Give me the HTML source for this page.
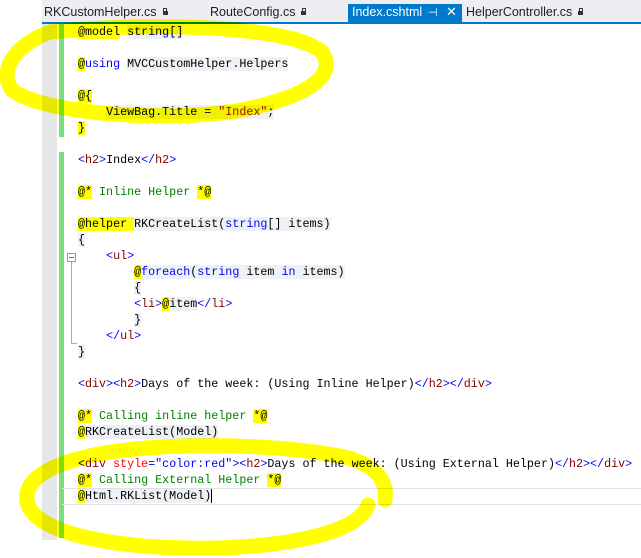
<!DOCTYPE html>
<html><head><meta charset="utf-8"><style>
*{margin:0;padding:0;box-sizing:border-box}
body{width:641px;height:558px;background:#fff;position:relative;overflow:hidden;font-family:"Liberation Mono",monospace}
.tabbar{position:absolute;left:42px;top:0;width:599px;height:22px;background:#eeeef2}
.tab{position:absolute;top:5px;font-family:"Liberation Sans",sans-serif;font-size:12.5px;color:#1e1e1e;white-space:nowrap}
.blue{position:absolute;left:42px;top:22px;width:599px;height:2px;background:#007acc}
.act{position:absolute;left:348px;top:4px;width:114px;height:19px;background:#007acc}
.gut{position:absolute;left:42px;top:24px;width:15px;height:516px;background:#e6e7e8}
.gr{position:absolute;left:59px;width:5px;background:#7ddc7d}
.l{position:absolute;left:78px;height:16px;line-height:16px;font-size:11.7px;color:#000;white-space:pre}
.y{background:#ffff00}
.c{background:#eef1f5}
.k{color:#0000ff}
.t{color:#800000}
.s{color:#a31515}
.m{color:#008000}
.r{color:#ff0000}
.lock{display:inline-block;width:5px;height:4px;background:#333;position:relative;margin-left:6px;top:-1px}
.lock:before{content:"";position:absolute;left:0.5px;top:-3px;width:2px;height:2px;border:1px solid #333;border-bottom:none}
</style></head><body>
<div class="tabbar"></div>
<div class="act"></div>
<div class="tab" style="left:44px">RKCustomHelper.cs<span class="lock"></span></div>
<div class="tab" style="left:210px">RouteConfig.cs<span class="lock"></span></div>
<div class="tab" style="left:352px;color:#fff">Index.cshtml</div>
<div class="tab" style="left:428px;color:#fff;font-size:11px;top:6px">⊣</div>
<div class="tab" style="left:446px;color:#fff;top:4px;font-size:13px">✕</div>
<div class="tab" style="left:466px">HelperController.cs<span class="lock"></span></div>
<div class="blue"></div>
<div class="gut"></div>
<div class="gr" style="top:24px;height:113px"></div>
<div class="gr" style="top:152px;height:386px"></div>
<div style="position:absolute;left:67px;top:253px;width:9px;height:9px;border:1px solid #999;background:#fff"></div>
<div style="position:absolute;left:69px;top:257px;width:5px;height:1px;background:#666"></div>
<div style="position:absolute;left:71px;top:262px;width:1px;height:82px;background:#aaa"></div>
<div style="position:absolute;left:71px;top:343px;width:6px;height:1px;background:#aaa"></div>
<div style="position:absolute;left:62px;top:488px;width:579px;height:17px;border-top:1px solid #e0e0e0;border-bottom:1px solid #e0e0e0"></div>

<div class="l" style="top:24px"><span class="y">@model</span> <span class="c"><span class="k">string</span>[]</span></div>
<div class="l" style="top:56px"><span class="y">@</span><span class="k">using</span> <span class="c">MVCCustomHelper.Helpers</span></div>
<div class="l" style="top:88px"><span class="y">@{</span></div>
<div class="l" style="top:104px">    <span class="c">ViewBag.Title = <span class="s">"Index"</span>;</span></div>
<div class="l" style="top:120px"><span class="y">}</span></div>
<div class="l" style="top:152px"><span class="k">&lt;</span><span class="t">h2</span><span class="k">&gt;</span>Index<span class="k">&lt;/</span><span class="t">h2</span><span class="k">&gt;</span></div>
<div class="l" style="top:184px"><span class="y">@*</span><span class="m"> Inline Helper </span><span class="y">*@</span></div>
<div class="l" style="top:216px"><span class="y">@helper </span><span class="c">RKCreateList(<span class="k">string</span>[] items)</span></div>
<div class="l" style="top:232px"><span class="c">{</span></div>
<div class="l" style="top:248px">    <span class="k">&lt;</span><span class="t">ul</span><span class="k">&gt;</span></div>
<div class="l" style="top:264px">        <span class="y">@</span><span class="c"><span class="k">foreach</span>(<span class="k">string</span> item <span class="k">in</span> items)</span></div>
<div class="l" style="top:280px">        <span class="c">{</span></div>
<div class="l" style="top:296px">        <span class="k">&lt;</span><span class="t">li</span><span class="k">&gt;</span><span class="y">@</span><span class="c">item</span><span class="k">&lt;/</span><span class="t">li</span><span class="k">&gt;</span></div>
<div class="l" style="top:312px">        <span class="c">}</span></div>
<div class="l" style="top:328px">    <span class="k">&lt;/</span><span class="t">ul</span><span class="k">&gt;</span></div>
<div class="l" style="top:344px"><span class="c">}</span></div>
<div class="l" style="top:376px"><span class="k">&lt;</span><span class="t">div</span><span class="k">&gt;&lt;</span><span class="t">h2</span><span class="k">&gt;</span>Days of the week: (Using Inline Helper)<span class="k">&lt;/</span><span class="t">h2</span><span class="k">&gt;&lt;/</span><span class="t">div</span><span class="k">&gt;</span></div>
<div class="l" style="top:408px"><span class="y">@*</span><span class="m"> Calling inline helper </span><span class="y">*@</span></div>
<div class="l" style="top:424px"><span class="y">@</span><span class="c">RKCreateList(Model)</span></div>
<div class="l" style="top:456px"><span class="k">&lt;</span><span class="t">div</span> <span class="r">style</span><span class="k">="color:red"&gt;&lt;</span><span class="t">h2</span><span class="k">&gt;</span>Days of the week: (Using External Helper)<span class="k">&lt;/</span><span class="t">h2</span><span class="k">&gt;&lt;/</span><span class="t">div</span><span class="k">&gt;</span></div>
<div class="l" style="top:472px"><span class="y">@*</span><span class="m"> Calling External Helper </span><span class="y">*@</span></div>
<div class="l" style="top:488px"><span class="y">@</span><span class="c">Html.RKList(Model)</span><span style="border-left:1px solid #000"></span></div>

<svg style="position:absolute;left:0;top:0;mix-blend-mode:multiply" width="641" height="558">
<g fill="none" stroke="#ffff00" stroke-width="15" stroke-linecap="round" stroke-linejoin="round">
<path d="M50 32 C150 22 290 25 322 52 C340 78 300 100 230 112 C150 122 40 112 12 90 C-2 70 15 45 50 32 Z"/>
<path d="M368 505 C360 530 300 545 220 548 C120 550 40 535 28 505 C20 480 50 462 110 452 C180 442 280 444 345 457 C375 465 388 480 385 500"/>
</g></svg>
</body></html>
